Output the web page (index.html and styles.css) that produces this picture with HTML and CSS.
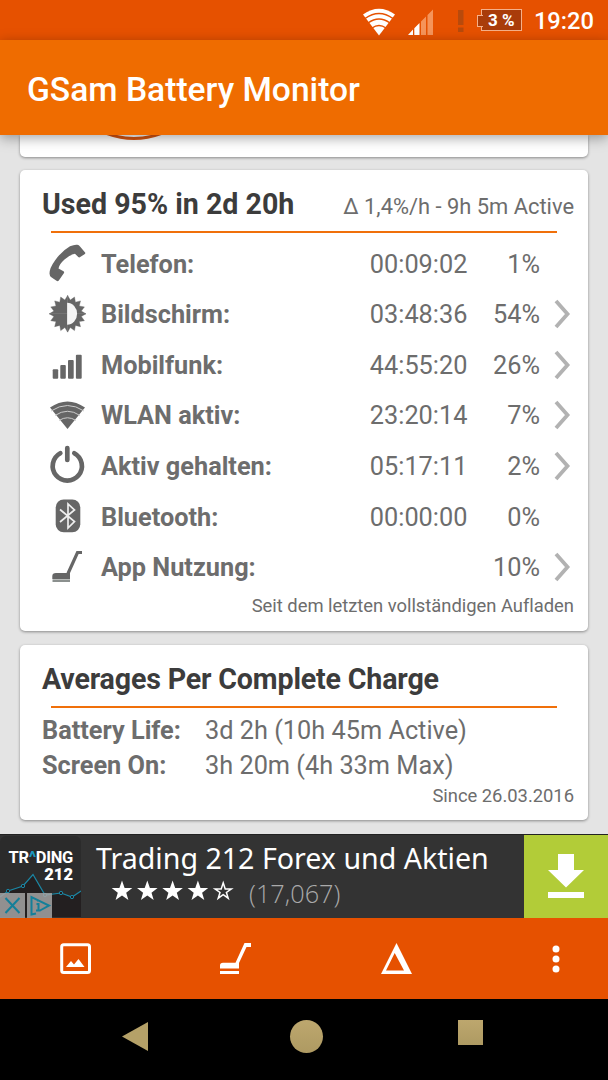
FILE: index.html
```html
<!DOCTYPE html>
<html lang="de">
<head>
  <meta charset="UTF-8" />
  <meta name="viewport" content="width=device-width, initial-scale=1.0" />
  <title>GSam Battery Monitor</title>
  <link rel="stylesheet" href="styles.css">
</head>
<body>
  <div class="status-bar">
    <svg class="status-wifi" width="34" height="28" viewBox="0 0 34 28">
      <path d="M1 6.5Q17-5 33 6.5L17 27.5Z" fill="#fff" />
      <path d="M3 10.5Q17 .5 31 10.5M6 15Q17 7 28 15M10 20Q17 15 24 20" fill="none" stroke="#e65100" stroke-width="1.4" />
    </svg>
    <svg class="status-signal" width="26" height="26" viewBox="0 0 26 26">
      <path d="M0 26L5 20.5V26ZM6.300 19.200L11.500 14V26H6.300Z" fill="#fff" />
      <path d="M13 12.500L18 7.500V26H13ZM19.500 6L25 .5V26H19.500Z" fill="#f5945a" />
    </svg>
    <svg class="status-alert" width="8" height="24" viewBox="0 0 8 24">
      <path d="M1 1H6.500V16H1ZM1 18.500H6.500V23H1Z" fill="#b84a0c" />
    </svg>
    <div class="battery">3 %</div>
    <span class="clock">19:20</span>
  </div>

  <header class="toolbar">
    <h1>GSam Battery Monitor</h1>
  </header>

  <main class="content">
    <section class="card card-top">
      <svg width="70" height="6" viewBox="0 0 70 6">
        <path d="M3 -3Q34 10 65 -3" fill="none" stroke="#d65410" stroke-width="3" />
      </svg>
    </section>

    <section class="card card-usage">
      <div class="card-head">
        <h2>Used 95% in 2d 20h</h2>
        <span class="rate">Δ 1,4%/h - 9h 5m Active</span>
      </div>
      <ul class="usage">
        <li>
          <svg class="icon" viewBox="0 0 40 40"><path d="M23 2.200Q27.500.3 30.300.7Q32 1 33 2.500L38.300 8.800Q38.500 9.800 37.500 10.300L32.800 13.300Q31.500 13.800 30.500 12.300L28 9.800Q23 10.500 17.500 15.500Q12 20.500 11.500 24.500L16.500 27.300Q17.500 28 17 29L11.800 36.500Q10.800 37.800 9.500 36.800L4 33Q2.700 32 2.500 29.500Q2.500 24 8 16.500Q14.500 7 23 2.200Z" /></svg>
          <span class="label">Telefon:</span><span class="time">00:09:02</span><span class="pct">1%</span>
        </li>
        <li>
          <svg class="icon" viewBox="0 0 40 40">
            <g transform="translate(20.600 18.800)">
              <path id="rays" d="M0 0V-18.300L2.700-13.700L6.900-16.800L7.800-11.600L12.900-12.900L11.600-7.800L16.800-6.900L13.700-2.700L18.300 0Z" stroke="#666" stroke-width=".4" />
              <use href="#rays" transform="rotate(90)" />
              <use href="#rays" transform="rotate(180)" />
              <use href="#rays" transform="rotate(270)" />
              <path d="M-.5-11A10 11 0 0 1-.5 11Z" fill="#f5f5f5" />
            </g>
          </svg>
          <span class="label">Bildschirm:</span><span class="time">03:48:36</span><span class="pct">54%</span>
          <svg class="chevron" viewBox="0 0 18 30"><path d="M3 2L14.500 15L3 28" /></svg>
        </li>
        <li>
          <svg class="icon" viewBox="0 0 40 40">
            <rect x="5.700" y="24.300" width="5.500" height="9.500" rx="1" /><rect x="13.300" y="20" width="5.500" height="13.800" rx="1" />
            <rect x="21" y="15" width="5.700" height="18.800" rx="1" /><rect x="28.900" y="9.700" width="5.800" height="24.100" rx="1" />
          </svg>
          <span class="label">Mobilfunk:</span><span class="time">44:55:20</span><span class="pct">26%</span>
          <svg class="chevron" viewBox="0 0 18 30"><path d="M3 2L14.500 15L3 28" /></svg>
        </li>
        <li>
          <svg class="icon" viewBox="0 0 40 40">
            <path d="M3 11.500Q20.500-.5 38 11.500L20.500 33Z" />
            <path d="M4 15Q20.500 4 37 15M8 19.500Q20.500 11 33 19.500M12 24.500Q20.500 19 29 24.500" fill="none" stroke="#ccc" stroke-width="1" />
          </svg>
          <span class="label">WLAN aktiv:</span><span class="time">23:20:14</span><span class="pct">7%</span>
          <svg class="chevron" viewBox="0 0 18 30"><path d="M3 2L14.500 15L3 28" /></svg>
        </li>
        <li>
          <svg class="icon" viewBox="0 0 40 40">
            <path d="M13.300 6.200A14.600 14.600 0 1 0 27.300 6.200M20.300 1V13" fill="none" stroke="#666" stroke-width="4.700" stroke-linecap="round" />
          </svg>
          <span class="label">Aktiv gehalten:</span><span class="time">05:17:11</span><span class="pct">2%</span>
          <svg class="chevron" viewBox="0 0 18 30"><path d="M3 2L14.500 15L3 28" /></svg>
        </li>
        <li>
          <svg class="icon" viewBox="0 0 40 40">
            <rect x="8.700" y="2.500" width="24.600" height="32.800" rx="8" />
            <path d="M13 12.500L27.500 24.500L21 31V7L27.500 13L13 25" fill="none" stroke="#eee" stroke-width="1.700" />
          </svg>
          <span class="label">Bluetooth:</span><span class="time">00:00:00</span><span class="pct">0%</span>
        </li>
        <li>
          <svg class="icon" viewBox="0 0 40 40">
            <path d="M35 4.500H30.500L21 25.500" fill="none" stroke="#666" stroke-width="3.200" />
            <path d="M5.300 31V28Q5.300 25 9 25H23V31Z" />
            <path d="M5.500 32.700H23" stroke="#8b908e" stroke-width="2.600" />
          </svg>
          <span class="label">App Nutzung:</span><span class="time"></span><span class="pct">10%</span>
          <svg class="chevron" viewBox="0 0 18 30"><path d="M3 2L14.500 15L3 28" /></svg>
        </li>
      </ul>
      <p class="note">Seit dem letzten vollständigen Aufladen</p>
    </section>

    <section class="card card-averages">
      <div class="card-head">
        <h2>Averages Per Complete Charge</h2>
      </div>
      <dl class="averages">
        <dt>Battery Life:</dt><dd>3d 2h (10h 45m Active)</dd>
        <dt>Screen On:</dt><dd>3h 20m (4h 33m Max)</dd>
      </dl>
      <p class="note">Since 26.03.2016</p>
    </section>
  </main>

  <aside class="ad">
    <div class="ad-logo">
      <div class="ad-brand">TR<span>^</span>DING<br><b>212</b></div>
      <svg class="ad-chart" width="81" height="44" viewBox="0 0 81 44">
        <path d="M0 23L8 18L23 13L33 1.500L45 22L61 20L72 24L81 18V44H0Z" fill="#231f20" />
        <path d="M0 24L8 18L23 13L33 1.500L45 22L61 20L72 24L81 18" fill="none" stroke="#1b87a5" stroke-width="1.200" />
        <g fill="#231f20" stroke="#1b87a5"><circle cx="8" cy="18" r="1.700" /><circle cx="23" cy="13" r="1.700" /><circle cx="45" cy="22" r="1.700" /><circle cx="61" cy="20" r="1.700" /><circle cx="72" cy="24" r="1.700" /></g>
      </svg>
      <div class="ad-controls">
        <svg width="25" height="25" viewBox="0 0 25 25"><path d="M5.500 5L19.500 20M19.500 5L5.500 20" /></svg>
        <svg width="25" height="25" viewBox="0 0 25 25"><path d="M9 20.500L4.500 21.500V4L22 12.500L13 17.500M11 6.500V8.500M9.500 11H11.500V17.500M9 17.500H13.500" /></svg>
      </div>
    </div>
    <div class="ad-text">
      <div class="ad-title">Trading 212 Forex und Aktien</div>
      <div class="ad-rating">
        <svg width="123" height="22" viewBox="0 0 123 22">
          <path id="star" d="M11 .5L13.600 8.100H21.300L15.200 12.700L17.400 20L11 15.600L4.600 20L6.800 12.700L.7 8.100H8.400Z" fill="#fff" />
          <use href="#star" x="25.300" /><use href="#star" x="50.600" /><use href="#star" x="75.900" />
          <path transform="translate(101.200)" d="M11 2.800L13 8.900H19.200L14.200 12.500L16 18.200L11 14.600L6 18.200L7.800 12.500L2.800 8.900H9Z" fill="none" stroke="#fff" stroke-width="1.500" />
        </svg>
        <span>(17,067)</span>
      </div>
    </div>
    <div class="ad-download">
      <svg width="38" height="46" viewBox="0 0 38 46">
        <path d="M11 1H27V17H37L19 34.500L1 17H11ZM1 39H37V45H1Z" fill="#fff" />
      </svg>
    </div>
  </aside>

  <nav class="action-bar">
    <svg class="action-image" width="32" height="32" viewBox="0 0 32 32">
      <rect x="1.700" y="1.700" width="27.800" height="27.800" rx="2" fill="none" stroke="#fff" stroke-width="3" />
      <path d="M6 24L11 18L14 21.500L18.500 16L24.500 24Z" fill="#fff" />
    </svg>
    <svg class="action-vacuum" width="32" height="32" viewBox="0 0 32 32">
      <path d="M31 0V4H26.500L19 20V25.500H0V22.500Q0 19.800 3 19.800H15.500L24.500 0ZM0 28H19V31H0Z" fill="#fff" />
    </svg>
    <svg class="action-delta" width="32" height="32" viewBox="0 0 32 32">
      <path d="M15.500 0L31 31H0ZM13.700 10L5 27.500H23Z" fill="#fff" fill-rule="evenodd" />
    </svg>
    <svg class="action-more" width="8" height="28" viewBox="0 0 8 28">
      <circle cx="4" cy="4" r="3.500" /><circle cx="4" cy="14" r="3.500" /><circle cx="4" cy="24" r="3.500" />
    </svg>
  </nav>

  <div class="nav-bar">
    <svg class="nav-back" width="26" height="29" viewBox="0 0 26 29"><path d="M0 14.500L26 0V29Z" fill="#b5a168" /></svg>
    <div class="nav-home"></div>
    <div class="nav-recent"></div>
  </div>
</body>
</html>
```
FILE: styles.css
```css
* {
  box-sizing: border-box;
}
body {
  margin: 0;
  width: 608px;
  height: 1080px;
  overflow: hidden;
  display: flex;
  flex-direction: column;
  font-family: Roboto, sans-serif;
  background-color: #e4e4e4;
  color: #6d6d6d;
}
svg {
  display: block;
  flex: none;
}
h1, h2, p, ul, dl, dd {
  margin: 0;
  padding: 0;
}

/* status bar + toolbar */
.status-bar {
  height: 40px;
  flex: none;
  display: flex;
  align-items: flex-start;
  padding: 8px 14px 0 0;
  justify-content: flex-end;
  background-color: #e65100;
  color: #fff;
}
.status-signal {
  margin: 1px 23px 0 12px;
}
.status-alert {
  margin-right: 12px;
}
.status-alert,
.battery {
  margin-top: 1px;
}
.battery {
  position: relative;
  width: 41px;
  height: 22px;
  margin-left: 4px;
  border: 1px solid #f5b08a;
  background-color: #a93c0a;
  font-size: 17px;
  font-weight: 700;
  line-height: 21px;
  text-align: center;
  white-space: nowrap;
}
.battery::before {
  content: "";
  position: absolute;
  left: -5px;
  top: 5px;
  width: 5px;
  height: 10px;
  border: 1px solid #f5b08a;
  border-right: none;
  background-color: #a93c0a;
}
.clock {
  margin-left: 12px;
  font-size: 23.7px;
  font-weight: 500;
  line-height: 27px;
}
.toolbar {
  position: relative;
  z-index: 1;
  height: 95px;
  flex: none;
  display: flex;
  align-items: center;
  padding: 4px 27px 0;
  background-color: #ef6c00;
  box-shadow: 0 3px 12px rgba(0, 0, 0, 0.35);
}
h1 {
  font-size: 33.6px;
  font-weight: 500;
  line-height: 40px;
  color: #fff;
}

/* cards */
.content {
  height: 699px;
  flex: none;
  padding: 0 20px;
}
.card {
  background-color: #fff;
  border-radius: 5px;
  box-shadow: 0 1px 3px rgba(0, 0, 0, 0.4);
  margin-bottom: 14px;
}
.card-top {
  height: 22px;
  margin-bottom: 13px;
  padding-left: 80px;
  border-radius: 0 0 5px 5px;
}
.card-usage {
  height: 461px;
}
.card-averages {
  height: 175px;
}
.card-head {
  height: 63px;
  margin: 0 14px 0 22px;
  padding-top: 17px;
  display: flex;
  justify-content: space-between;
  align-items: baseline;
  position: relative;
}
.card-averages h2 {
  letter-spacing: -0.16px;
}
.card-head::after {
  content: "";
  position: absolute;
  left: 9px;
  right: 17px;
  bottom: 0;
  height: 2px;
  background-color: #f0700a;
}
h2 {
  font-size: 28.6px;
  font-weight: 700;
  line-height: 34px;
  color: #3c3c3c;
}
.rate {
  font-size: 21.9px;
}
.usage {
  list-style: none;
  padding-top: 5.7px;
  font-size: 25.3px;
}
.usage li {
  display: grid;
  grid-template-columns: 54px 248.4px 118px 72.6px 32px;
  align-items: center;
  height: 50.67px;
  padding-left: 27px;
}
.icon {
  width: 40px;
  height: 40px;
  fill: #666;
  overflow: visible;
}
.label, dt {
  font-weight: 700;
}
.time, .pct {
  text-align: right;
}
.chevron {
  width: 18px;
  height: 30px;
  margin: 0 0 1px 13px;
  fill: none;
  stroke: #b2b2b2;
  stroke-width: 3.8;
}
.note {
  padding: 2px 14px 0 0;
  font-size: 18.4px;
  line-height: 22px;
  letter-spacing: -0.02px;
  text-align: right;
}
.averages {
  display: grid;
  grid-template-columns: 163px 1fr;
  padding: 6px 0 0 22px;
  font-size: 25.3px;
  line-height: 34.5px;
}

/* ad banner */
.ad {
  height: 84px;
  flex: none;
  display: flex;
  background-color: #333;
  color: #fff;
  border-top: 1px solid #222;
}
.ad-logo {
  position: relative;
  width: 81px;
  height: 81px;
  margin-top: 1px;
  border-radius: 6px;
  background-color: #2b2b2b;
}
.ad-brand {
  padding: 13px 8px 0 0;
  font-size: 16.5px;
  font-weight: 700;
  line-height: 17px;
  letter-spacing: -0.3px;
  text-align: right;
}
.ad-brand span {
  color: #1b9ac0;
  font-weight: 900;
}
.ad-brand b {
  letter-spacing: 0;
}
.ad-chart {
  position: absolute;
  left: 0;
  bottom: 0;
}
.ad-controls {
  position: absolute;
  left: 0;
  top: 57px;
  display: flex;
  gap: 2px;
}
.ad-controls svg {
  background-color: rgba(165, 165, 165, 0.85);
  fill: none;
  stroke: #147f99;
  stroke-width: 2;
}
.ad-text {
  width: 443px;
  padding-left: 15px;
  font-family: "Noto Sans", sans-serif;
}
.ad-title {
  font-size: 28.6px;
  line-height: 38px;
  padding-top: 4px;
  white-space: nowrap;
}
.ad-rating {
  display: flex;
  align-items: center;
  padding-left: 15px;
  height: 27px;
}
.ad-rating span {
  margin-left: 15px;
  padding-top: 5px;
  font-family: "Open Sans", sans-serif;
  font-size: 25.3px;
  font-weight: 300;
  color: #aaa;
}
.ad-download {
  flex: 1;
  display: flex;
  justify-content: center;
  padding-top: 18px;
  background-color: #b2cc38;
}

/* bottom bars */
.action-bar {
  height: 81px;
  flex: none;
  display: flex;
  align-items: center;
  padding-left: 60px;
  background-color: #e65100;
  fill: #fff;
}
.action-vacuum {
  margin-left: 128px;
}
.action-delta {
  margin-left: 129px;
}
.action-more {
  margin-left: 139px;
}
.nav-bar {
  height: 81px;
  flex: none;
  display: flex;
  align-items: flex-start;
  padding: 21px 0 0 122px;
  background-color: #000;
}
.nav-back {
  margin-top: 2px;
}
.nav-home {
  width: 33px;
  height: 33px;
  margin-left: 142px;
  border-radius: 50%;
  background: linear-gradient(#bda76e, #ae9a62);
}
.nav-recent {
  width: 25px;
  height: 25px;
  margin-left: 135px;
  background: linear-gradient(#bda76e, #ae9a62);
}
```
